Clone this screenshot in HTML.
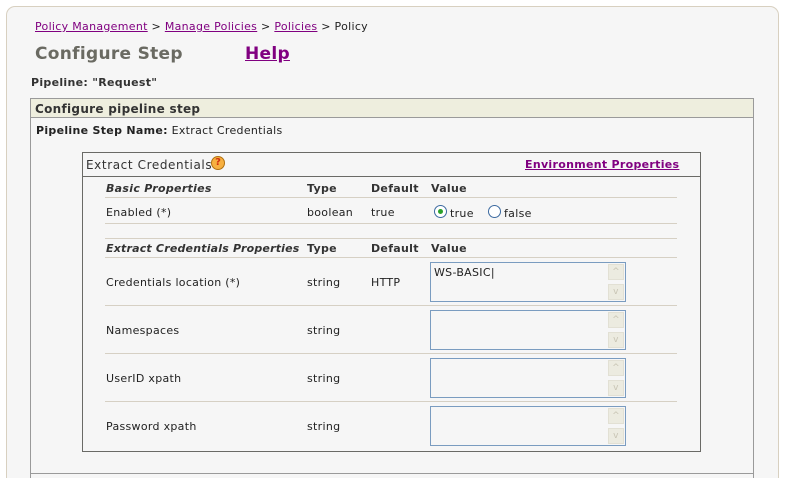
<!DOCTYPE html>
<html style="width:786px;height:478px;overflow:hidden"><head><meta charset="utf-8"><style>
*{margin:0;padding:0;box-sizing:border-box}
body{width:786px;height:478px;background:#fff;font-family:"DejaVu Sans","Liberation Sans",sans-serif;font-size:11px;letter-spacing:0.3px;color:#222;position:relative;overflow:hidden}
.a{position:absolute;white-space:nowrap}
a{color:#800080;text-decoration:underline}
.page{position:absolute;left:6px;top:6px;width:773px;height:472px;background:#f6f6f6;border:1px solid #d8d0c0;border-bottom:none;border-radius:9px 9px 0 0}
.hl{position:absolute;height:1px;background:#d6d0c4;left:105px;width:572px}
.ta{position:absolute;left:430px;width:196px;height:40px;border:1px solid #7a9cc0;background:#f6f6f6}
.sb{position:absolute;right:1px;width:16px;height:16px;background:#ecebe0;border:1px solid #e2e0d4;color:#c8c4b4;font-size:9px;text-align:center;line-height:14px}
b{font-weight:bold}
</style></head><body>
<div class="page"></div>
<div class="a" style="left:35px;top:20px"><a>Policy Management</a> &gt; <a>Manage Policies</a> &gt; <a>Policies</a> &gt; Policy</div>
<div class="a" style="left:35px;top:44px;font-size:17px;font-weight:bold;color:#6a6a62">Configure Step</div>
<div class="a" style="left:245px;top:44px;font-size:17px;font-weight:bold"><a>Help</a></div>
<div class="a" style="left:31px;top:76px;font-weight:bold;color:#333">Pipeline: "Request"</div>
<div class="a" style="left:30px;top:98px;width:724px;height:380px;border:1px solid #9a9a9a;border-bottom:none"></div>
<div class="a" style="left:31px;top:99px;width:722px;height:19px;background:#eeeede;border-bottom:1px solid #9a9a9a"></div>
<div class="a" style="left:35px;top:102px;font-weight:bold;font-size:12px;color:#333">Configure pipeline step</div>
<div class="a" style="left:36px;top:124px"><b>Pipeline Step Name:</b> Extract Credentials</div>
<div class="a" style="left:31px;top:473px;width:722px;height:1px;background:#9a9a9a"></div>
<div class="a" style="left:82px;top:152px;width:619px;height:300px;border:1px solid #6a6a66"></div>
<div class="a" style="left:83px;top:176px;width:617px;height:1px;background:#6a6a66"></div>
<div class="a" style="left:86px;top:158px;font-size:12px;letter-spacing:0.6px;color:#333">Extract Credentials</div>
<div class="a" style="left:211px;top:156px;width:14px;height:14px;border-radius:50%;background:#f7b040;border:1px solid #b07010;color:#d03010;font-size:10px;font-weight:bold;text-align:center;line-height:12px;letter-spacing:0">?</div>
<div class="a" style="left:525px;top:158px;font-weight:bold;letter-spacing:0.3px"><a>Environment Properties</a></div>
<div class="a" style="left:106px;top:182px;font-weight:bold;font-style:italic;color:#333">Basic Properties</div>
<div class="a" style="left:307px;top:182px;font-weight:bold;color:#333">Type</div>
<div class="a" style="left:371px;top:182px;font-weight:bold;color:#333">Default</div>
<div class="a" style="left:431px;top:182px;font-weight:bold;color:#333">Value</div>
<div class="hl" style="top:197px"></div>
<div class="a" style="left:106px;top:206px">Enabled (*)</div>
<div class="a" style="left:307px;top:206px">boolean</div>
<div class="a" style="left:371px;top:206px">true</div>
<div class="a" style="left:434px;top:205px;width:13px;height:13px;border-radius:50%;border:1px solid #3c6aa0;background:#fff"><div style="position:absolute;left:3px;top:3px;width:5px;height:5px;border-radius:50%;background:#2aa02a"></div></div>
<div class="a" style="left:450px;top:207px">true</div>
<div class="a" style="left:488px;top:205px;width:13px;height:13px;border-radius:50%;border:1px solid #3c6aa0;background:#fff"></div>
<div class="a" style="left:504px;top:207px">false</div>
<div class="hl" style="top:223px"></div>
<div class="hl" style="top:238px"></div>
<div class="a" style="left:106px;top:242px;font-weight:bold;font-style:italic;color:#333;letter-spacing:0.2px">Extract Credentials Properties</div>
<div class="a" style="left:307px;top:242px;font-weight:bold;color:#333">Type</div>
<div class="a" style="left:371px;top:242px;font-weight:bold;color:#333">Default</div>
<div class="a" style="left:431px;top:242px;font-weight:bold;color:#333">Value</div>
<div class="hl" style="top:257px"></div>
<div class="a" style="left:106px;top:276px">Credentials location (*)</div>
<div class="a" style="left:307px;top:276px">string</div>
<div class="a" style="left:371px;top:276px">HTTP</div>
<div class="ta" style="top:262px"><div class="a" style="left:3px;top:3px">WS-BASIC|</div><div class="sb" style="top:1px">^</div><div class="sb" style="bottom:1px">v</div></div>
<div class="hl" style="top:305px"></div>
<div class="a" style="left:106px;top:324px">Namespaces</div>
<div class="a" style="left:307px;top:324px">string</div>
<div class="ta" style="top:310px"><div class="sb" style="top:1px">^</div><div class="sb" style="bottom:1px">v</div></div>
<div class="hl" style="top:353px"></div>
<div class="a" style="left:106px;top:372px">UserID xpath</div>
<div class="a" style="left:307px;top:372px">string</div>
<div class="ta" style="top:358px"><div class="sb" style="top:1px">^</div><div class="sb" style="bottom:1px">v</div></div>
<div class="hl" style="top:401px"></div>
<div class="a" style="left:106px;top:420px">Password xpath</div>
<div class="a" style="left:307px;top:420px">string</div>
<div class="ta" style="top:406px"><div class="sb" style="top:1px">^</div><div class="sb" style="bottom:1px">v</div></div>
</body></html>
